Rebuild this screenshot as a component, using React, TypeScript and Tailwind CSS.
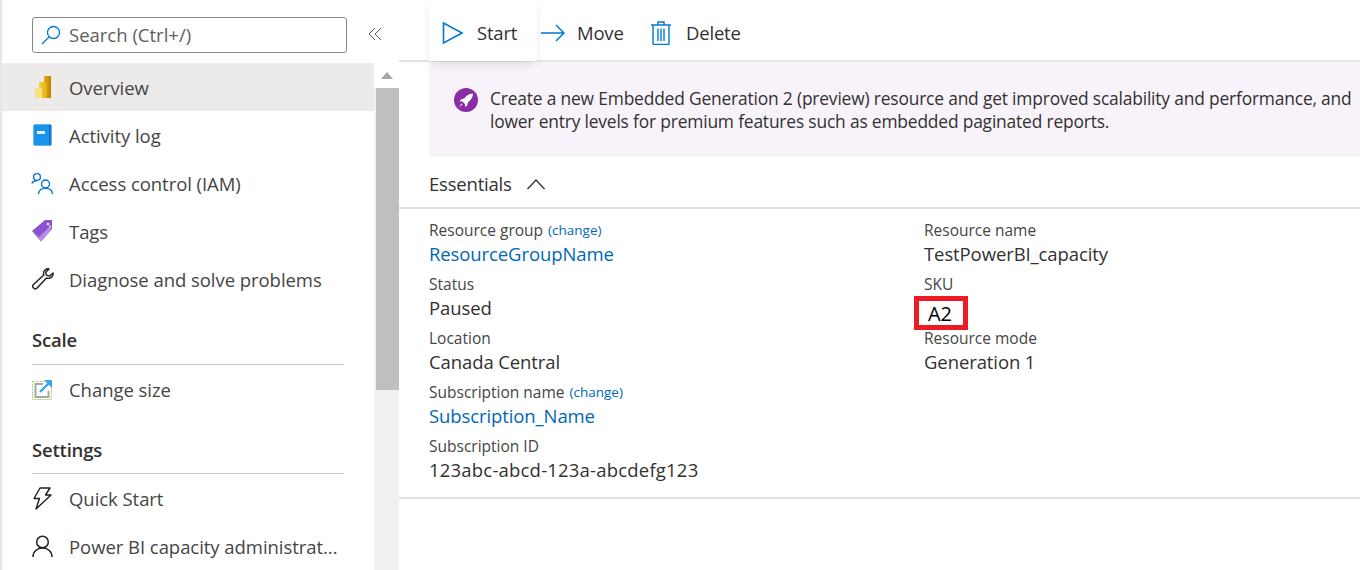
import type { ReactNode } from 'react';

const font = { fontFamily: '"Open Sans", "Noto Sans", sans-serif' };

// icons
const SearchIcon = () => (
  <svg width="20" height="20" viewBox="0 0 20 20" fill="none" stroke="#0078d4" strokeWidth="1.3">
    <circle cx="12.5" cy="7.5" r="6" />
    <path d="M8 12 1 19" />
  </svg>
);

const PowerBiIcon = () => (
  <svg width="16" height="22" viewBox="0 0 16 22">
    <defs>
      <linearGradient id="pbiTall" x1="0" x2="1" y1="0" y2="0">
        <stop offset="0" stopColor="#e6ad10" />
        <stop offset="1" stopColor="#c07f00" />
      </linearGradient>
      <linearGradient id="pbiMid" x1="0" x2="1" y1="0" y2="0">
        <stop offset="0" stopColor="#f6d24a" />
        <stop offset="1" stopColor="#e6ad10" />
      </linearGradient>
    </defs>
    <rect x="9" y="0" width="7" height="22" rx="0.5" fill="url(#pbiTall)" />
    <rect x="4" y="6" width="8" height="16" rx="0.5" fill="url(#pbiMid)" />
    <rect x="0" y="12" width="7" height="10" rx="0.5" fill="#f9e27d" />
  </svg>
);

const LogIcon = () => (
  <svg width="19" height="22" viewBox="0 0 19 22">
    <rect x="0.5" y="0.5" width="18" height="21" rx="1.5" fill="#1b93eb" stroke="#6cb4e8" />
    <rect x="16" y="1" width="1.5" height="20" fill="#0f6cbd" />
    <rect x="4" y="7" width="8" height="3" fill="#dff0fb" />
  </svg>
);

const PeopleIcon = () => (
  <svg width="23" height="23" viewBox="0 0 23 23" fill="none" stroke="#0078d4" strokeWidth="1.4">
    <circle cx="6" cy="5" r="3.4" />
    <path d="M0.8 11.5C1.6 9.7 3.5 8.8 6 8.8" />
    <circle cx="14.5" cy="12" r="4" />
    <path d="M7.5 22c.3-3.4 3-5.6 7-5.6s6.7 2.2 7 5.6" />
  </svg>
);

const TagIcon = () => (
  <svg width="21" height="22" viewBox="0 0 21 22">
    <path d="M0 11 13 0h7v9L9 21.500z" fill="#8a53cf" />
    <path d="M0 11l9 10.500L20 9l-3-2L7 17z" fill="#b78be6" />
    <circle cx="16" cy="4" r="1.300" fill="#f1e8fa" />
    <circle cx="18" cy="6.500" r="1" fill="#f1e8fa" />
  </svg>
);

const WrenchIcon = () => (
  <svg width="22" height="22" viewBox="0 0 22 22" fill="none" stroke="#1f1f1f" strokeWidth="1.4" strokeLinejoin="round">
    <path d="M17 .9c-2.800-.5-5.500 1.600-5.500 4.500 0 .7.100 1.200.3 1.700L1.500 16.500c-1 1-1 2.500 0 3.500s2.600 1 3.600 0l9.400-10c.6.300 1.300.4 2 .4 2.800 0 5-2.500 4.600-5.400l-3.600 3.100-3.200-.9-.6-3z" />
  </svg>
);

const ResizeIcon = () => (
  <svg width="21" height="21" viewBox="0 0 21 21" fill="none">
    <rect x="0.5" y="2.500" width="19" height="18" stroke="#a3d05c" strokeDasharray="1.500 1" />
    <path d="M11 5H3.500v13h13v-6" stroke="#a6a6a6" strokeWidth="2" />
    <path d="M8 13 18 3" stroke="#3aa0f0" strokeWidth="2.400" />
    <path d="M12 1h8v8z" fill="#3aa0f0" />
  </svg>
);

const BoltIcon = () => (
  <svg width="19" height="23" viewBox="0 0 19 23" fill="none" stroke="#1f1f1f" strokeWidth="1.400" strokeLinejoin="round">
    <path d="M7 1h10l-4.500 7H18L3 22l3.500-10.500H1z" />
  </svg>
);

const PersonIcon = () => (
  <svg width="21" height="22" viewBox="0 0 21 22" fill="none" stroke="#1f1f1f" strokeWidth="1.500">
    <circle cx="10.500" cy="7" r="5.800" />
    <path d="M1 22c0-5.500 4-9 9.500-9s9.500 3.500 9.500 9" />
  </svg>
);

const RocketBadge = () => (
  <svg width="24" height="24" viewBox="0 0 24 24">
    <circle cx="12" cy="12" r="12" fill="#8a2da5" />
    <path d="M18.500 5.500c-3.500.3-6 2-8.300 5l-3 .7-1.700 2 3 .4 2.400 2.400.4 3 2-1.700.7-3c3-2.300 4.700-4.800 5-8.300z" fill="#fff" />
    <path d="M7.500 15.500 5 19l3.500-2.500z" fill="#fff" />
  </svg>
);

const NavItem = ({
  icon,
  label,
  active,
}: {
  icon: ReactNode;
  label: string;
  active?: boolean;
}) => (
  <div className={`flex h-12 items-center ${active ? 'bg-[#edebe9]' : ''}`}>
    <div className="flex w-[67px] shrink-0 justify-center pl-[20px] pr-[6px]">{icon}</div>
    <span className="whitespace-nowrap pt-[2px] text-[18.5px] tracking-[-0.05px] text-[#454545]">{label}</span>
  </div>
);

const SectionTitle = ({ title, className }: { title: string; className: string }) => (
  <div className={`mx-[30px] border-b border-[#c8c6c4] ${className}`}>
    <span className="text-[18.5px] font-semibold leading-[28px] tracking-[-0.2px] text-[#323130]">{title}</span>
  </div>
);

const Sidebar = () => (
  <div className="flex h-full w-[399px] shrink-0 flex-col border-l-2 border-[#e6e6e6]">
    <div className="flex h-[63px] shrink-0 items-start pt-[17px]">
      <div className="ml-[30px] flex h-[36px] w-[315px] items-center rounded-[3px] border border-[#8a8886] pl-[8px]">
        <SearchIcon />
        <span className="ml-[8px] text-[18.5px] text-[#605e5c]">Search (Ctrl+/)</span>
      </div>
      <span className="ml-[21px] mt-[10px] text-[#605e5c]">
        <svg width="14" height="14" viewBox="0 0 14 14" fill="none" stroke="#605e5c" strokeWidth="1">
          <path d="M7 1 1 7l6 6M13 1 7 7l6 6" />
        </svg>
      </span>
    </div>
    <div className="flex min-h-0 flex-1">
      <div className="w-[372px] shrink-0">
        <NavItem icon={<PowerBiIcon />} label="Overview" active />
        <NavItem icon={<LogIcon />} label="Activity log" />
        <NavItem icon={<PeopleIcon />} label="Access control (IAM)" />
        <NavItem icon={<TagIcon />} label="Tags" />
        <NavItem icon={<WrenchIcon />} label="Diagnose and solve problems" />
        <div className="mt-[23px]">
          <SectionTitle title="Scale" className="pb-[10px]" />
        </div>
        <NavItem icon={<ResizeIcon />} label="Change size" />
        <div className="mt-[23px]">
          <SectionTitle title="Settings" className="pb-[9px]" />
        </div>
        <NavItem icon={<BoltIcon />} label="Quick Start" />
        <NavItem icon={<PersonIcon />} label="Power BI capacity administrat..." />
      </div>
      <div className="flex w-[25px] shrink-0 flex-col items-end bg-[#f1f1f1]">
        <div className="flex h-[25px] w-[25px] items-center justify-center bg-white">
          <svg width="12" height="7" viewBox="0 0 12 7">
            <path d="M6 0l6 7H0z" fill="#a6a6a6" />
          </svg>
        </div>
        <div className="h-[302px] w-[23px] bg-[#bfbfbf]" />
      </div>
    </div>
  </div>
);

const ToolButton = ({ icon, label, className }: { icon: ReactNode; label: string; className?: string }) => (
  <div className={`flex items-center ${className ?? ''}`}>
    {icon}
    <span className="text-[18.5px] tracking-[-0.2px] text-[#323130]">{label}</span>
  </div>
);

const Toolbar = () => (
  <div className="flex h-[62px] shrink-0 border-b-2 border-[#e4e4e4] pl-[30px]">
    <ToolButton
      className="relative z-10 h-[61px] w-[108px] bg-white pl-[13px] pt-[5px] shadow-[0_4px_10px_-3px_rgba(0,0,0,0.16)]"
      label="Start"
      icon={
        <svg className="mr-[13px]" width="22" height="24" viewBox="0 0 22 24" fill="none" stroke="#0078d4" strokeWidth="1.600">
          <path d="M1.500 2 20 12 1.500 22z" />
        </svg>
      }
    />
    <ToolButton
      className="ml-[4px] w-[110px] pt-[6px]"
      label="Move"
      icon={
        <svg className="mr-[12px]" width="24" height="18" viewBox="0 0 24 18" fill="none" stroke="#0078d4" strokeWidth="1.500">
          <path d="M0 9h23M15 1l8 8-8 8" />
        </svg>
      }
    />
    <ToolButton
      className="pt-[6px]"
      label="Delete"
      icon={
        <svg className="mr-[15px]" width="20" height="24" viewBox="0 0 20 24" fill="none" stroke="#0078d4" strokeWidth="1.400">
          <path d="M0 4h20M7 4V1h6v3M2 4v18.500a1 1 0 0 0 1 1h14a1 1 0 0 0 1-1V4M7 7.500v12.500M10 7.500v12.500M13 7.500v12.500" />
        </svg>
      }
    />
  </div>
);

const Banner = () => (
  <div className="ml-[30px] flex h-[95px] shrink-0 rounded-b-[2px] bg-[#f8f3fb] pl-[25px] pt-[25px]">
    <div className="shrink-0 pt-[1px]">
      <RocketBadge />
    </div>
    <p className="ml-[12px] whitespace-nowrap text-[17.4px] leading-[23px] tracking-[-0.18px] text-[#323130]">
      Create a new Embedded Generation 2 (preview) resource and get improved scalability and performance, and
      <br />
      lower entry levels for premium features such as embedded paginated reports.
    </p>
  </div>
);

const Field = ({
  label,
  change,
  value,
  link,
  wide,
}: {
  label: string;
  change?: boolean;
  value: ReactNode;
  link?: boolean;
  wide?: boolean;
}) => (
  <div className="h-[54px]">
    <div className="h-[24px] text-[15.500px] leading-[24px] text-[#454545]">
      {label}
      {change && (
        <span className="ml-[5px] inline-block -translate-y-[1px] text-[13.500px] text-[#0067b8]">(change)</span>
      )}
    </div>
    <div
      className={`h-[30px] text-[18.500px] leading-[24px] ${wide ? 'tracking-[0.2px]' : 'tracking-[-0.1px]'} ${
        link ? 'text-[#0067b8]' : 'text-[#323130]'
      }`}
    >
      {value}
    </div>
  </div>
);

const Essentials = () => (
  <>
    <div className="flex h-[52px] shrink-0 items-center border-b-2 border-[#e0e0e0] pl-[30px] pt-[4px]">
      <span className="text-[18.500px] tracking-[-0.2px] text-[#323130]">Essentials</span>
      <svg className="ml-[14px]" width="20" height="12" viewBox="0 0 20 12" fill="none" stroke="#323130" strokeWidth="1.300">
        <path d="M1.500 11 10 2l8.500 9" />
      </svg>
    </div>
    <div className="flex h-[290px] shrink-0 border-b-2 border-[#e0e0e0] pl-[30px] pt-[9px]">
      <div className="w-[495px] shrink-0">
        <Field label="Resource group" change value="ResourceGroupName" link />
        <Field label="Status" value="Paused" />
        <Field label="Location" value="Canada Central" />
        <Field label="Subscription name" change value="Subscription_Name" link />
        <Field label="Subscription ID" value="123abc-abcd-123a-abcdefg123" wide />
      </div>
      <div>
        <Field label="Resource name" value="TestPowerBI_capacity" />
        <div className="h-[54px]">
          <div className="h-[18px] text-[15.500px] leading-[24px] text-[#454545]">SKU</div>
          {/* red callout drawn over the screenshot */}
          <div className="relative z-10 ml-[-10px] mt-[6px] flex h-[34px] w-[54px] items-center border-[5px] border-[#ed1c24] bg-white pl-[9px] pt-[2px] text-[20px] tracking-[-0.2px] text-black">
            A2
          </div>
        </div>
        <Field label="Resource mode" value="Generation 1" />
      </div>
    </div>
  </>
);

const App = () => {
  return (
    <div className="flex h-[570px] w-[1360px] overflow-hidden bg-white" style={font}>
      <Sidebar />
      <div className="flex min-w-0 flex-1 flex-col">
        <Toolbar />
        <Banner />
        <Essentials />
      </div>
    </div>
  );
};

export default App;
